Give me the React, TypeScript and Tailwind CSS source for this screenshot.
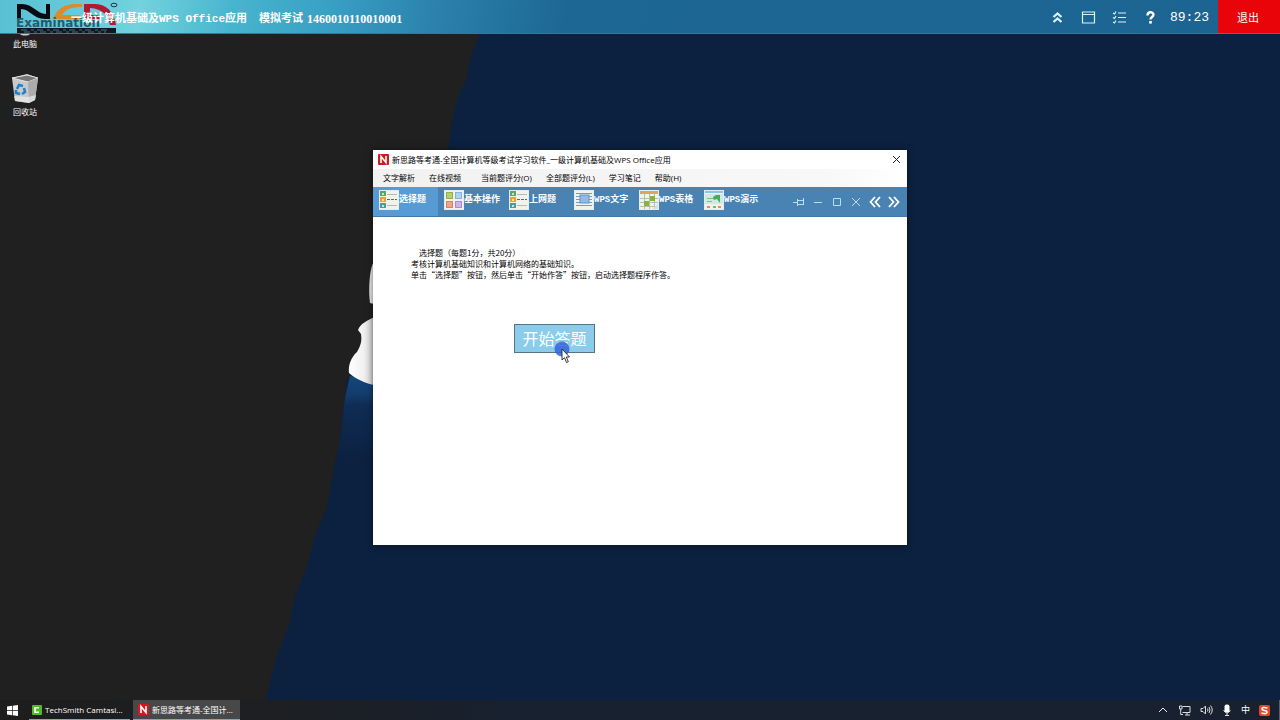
import type { ReactNode } from "react";

const cjk = "font-['Noto_Sans_CJK_SC',sans-serif]";
const ui = "font-['Open_Sans','Noto_Sans_CJK_SC',sans-serif]";
const mono = "font-['Liberation_Mono','Noto_Sans_CJK_SC',monospace]";

function Wallpaper() {
  return (
    <svg
      className="absolute inset-0 h-full w-full"
      viewBox="0 0 1280 720"
      preserveAspectRatio="xMidYMid slice"
      aria-hidden="true"
    >
      <defs>
        <linearGradient id="sea" x1="0" y1="0" x2="0" y2="1">
          <stop offset="0" stopColor="#15467a" />
          <stop offset="0.22" stopColor="#133c6c" />
          <stop offset="0.35" stopColor="#0f2c53" />
          <stop offset="1" stopColor="#0c2140" />
        </linearGradient>
        <linearGradient id="snow" x1="0" y1="0" x2="1" y2="0">
          <stop offset="0" stopColor="#ffffff" />
          <stop offset="0.6" stopColor="#f0f0f0" />
          <stop offset="1" stopColor="#c8c8c8" />
        </linearGradient>
      </defs>
      <rect width="1280" height="720" fill="#0c2140" />
      <path
        d="M0 0H490L480 34L471 56L466 80L458 96L452 120L448 150V250H373V385L347 378L344 402L339 444L335 462L326 510L315 535L306 570L295 595L289 625L277 655L266 698L260 720H0Z"
        fill="#202020"
      />
      <path d="M373 380L350 376L345 398L340 440L336 460H373Z" fill="url(#sea)" />
      <path d="M374 262C370 266 368 288 370 303L374 304Z" fill="#e4e4e4" />
      <path
        d="M374 317C367 321 361 323 358 330L361 334C362 341 361 345 357 352C351 357 348 366 349 373C356 379 365 383 374 385Z"
        fill="url(#snow)"
      />
    </svg>
  );
}

function Logo() {
  return (
    <div className="absolute left-4 top-0 h-[33px] w-[102px]" aria-hidden="true">
      <svg className="absolute inset-0" width="102" height="33" viewBox="0 0 102 33">
        <path d="M1 19V4H6C17 4 21 14 30 14V4H34V19H29C17 19 14 9 5 9V19Z" fill="#080b12" />
        <path d="M66 4H60C48 4 41 9 37 19H64V15H46C50 9 55 7 66 7Z" fill="#dd8a2b" />
        <path d="M68 4H78C90 4 98 11 100 25H94C92 15 87 9 74 8V15H84V19H68Z" fill="#b51632" />
        <ellipse cx="98" cy="5" rx="3" ry="1.8" fill="none" stroke="#1d3540" />
        <rect x="1" y="28" width="99" height="5" fill="#0d1820" />
        <path d="M5 30H94M8 32H90" stroke="#47727e" strokeDasharray="6 4 3 3" />
      </svg>
      <span className="absolute left-0 top-[18px] font-['DejaVu_Sans',sans-serif] text-xs leading-[11px] font-bold text-[#235b6c]">
        Examination
      </span>
    </div>
  );
}

function NIcon() {
  return (
    <svg width="11" height="11" viewBox="0 0 11 11" aria-hidden="true" className="shrink-0">
      <rect width="11" height="11" rx="1" fill="#d3191f" />
      <path d="M3 9V2.5L8 8.5V2" fill="none" stroke="#fff" strokeWidth="1.6" />
    </svg>
  );
}

function ListArt() {
  return (
    <>
      <rect x="1" y="1" width="6" height="5" fill="#5fa565" />
      <rect x="1" y="7" width="6" height="5" fill="#e0a63c" />
      <rect x="1" y="13" width="6" height="5" fill="#4f9b9c" />
      <rect x="3" y="3" width="2" height="2" fill="#d8e6a8" />
      <rect x="3" y="9" width="2" height="2" fill="#f6e3a8" />
      <rect x="3" y="15" width="2" height="2" fill="#c5e4df" />
      <path d="M8 4.500H18M8 15.500H18" stroke="#b9b9b9" />
      <path d="M8 9.500H18" stroke="#666" strokeDasharray="3 1" />
    </>
  );
}

function GridArt() {
  return (
    <>
      <rect x="2.500" y="2.500" width="6" height="6" fill="#b5cf6d" stroke="#94b24c" />
      <rect x="11.500" y="2.500" width="6" height="6" fill="#aed2ef" stroke="#83b3df" />
      <rect x="2.500" y="11.500" width="6" height="6" fill="#f0a38c" stroke="#dc8267" />
      <rect x="11.500" y="11.500" width="6" height="6" fill="#cbb5e8" stroke="#ab8cd0" />
    </>
  );
}

function DocArt() {
  return (
    <>
      <path d="M2 3.500H18M2 6.500H18M2 9.500H18M2 12.500H18M2 15.500H18" stroke="#7d9ab2" />
      <rect x="6" y="5" width="9" height="8" fill="#8fbbe4" stroke="#5e93c4" />
    </>
  );
}

function SheetArt() {
  return (
    <>
      <rect x="0" y="0" width="20" height="4" fill="#e7a05d" />
      <path d="M1 8.500H19M1 12.500H19M1 16.500H19M5.500 4V19M10.500 4V19M15.500 4V19" stroke="#b9bcae" />
      <rect x="11" y="6" width="5" height="5" fill="#84b63c" />
      <rect x="5" y="11" width="5" height="5" fill="#84b63c" />
      <path d="M13 20L20 12V20Z" fill="#d8e0e2" />
    </>
  );
}

function SlideArt() {
  return (
    <>
      <rect x="0" y="0" width="20" height="3" fill="#8cc5df" />
      <rect x="1" y="4" width="18" height="10" fill="#cfe9e3" />
      <path d="M3 8.500H11M3 11.500H8" stroke="#7cc09a" />
      <path d="M9 7L12 5H16V13L13 9L10 10Z" fill="#48a866" />
      <rect x="3" y="16" width="3" height="2" fill="#e28a69" />
      <rect x="9" y="16" width="3" height="2" fill="#7fb66b" />
      <rect x="14" y="16" width="3" height="2" fill="#e28a69" />
    </>
  );
}

const tabs: { label: string; art: ReactNode }[] = [
  { label: "选择题", art: <ListArt /> },
  { label: "基本操作", art: <GridArt /> },
  { label: "上网题", art: <ListArt /> },
  { label: "WPS文字", art: <DocArt /> },
  { label: "WPS表格", art: <SheetArt /> },
  { label: "WPS演示", art: <SlideArt /> },
];

const menus = [
  ["文字解析", "在线视频"],
  ["当前题评分(O)", "全部题评分(L)", "学习笔记", "帮助(H)"],
];

const tools = [
  { label: "固定", path: "M0 6.500H4M4.500 3V10M4.500 4.500H10M4.500 8.500H10M10.500 2V9" },
  { label: "最小化", path: "M2 6.500H10" },
  { label: "最大化", path: "M2.500 2.500H9.500V9.500H2.500Z" },
  { label: "关闭", path: "M2 2L10 10M10 2L2 10" },
];

function Header() {
  return (
    <header className="relative flex h-[34px] items-stretch justify-between border-b border-[#3d7690] bg-[linear-gradient(100deg,#58c0d4_0px,#72d2dd_140px,#48b5cf_230px,#389fc3_330px,#2b82ac_430px,#1d6794_560px,#1c6491_100%)] text-white">
      <Logo />
      <div className={`relative flex items-center gap-3 pl-[71px] pt-1 ${mono} font-bold`}>
        <h1 className="whitespace-nowrap text-[11px] leading-4">一级计算机基础及WPS Office应用</h1>
        <p className="flex items-center gap-1 whitespace-nowrap text-[11px] leading-4">
          <span>模拟考试</span>
          <span className="font-['Liberation_Serif',serif] text-xs leading-4">1460010110010001</span>
        </p>
      </div>
      <div className="relative flex items-stretch">
        <div className="flex items-center gap-3 pr-[9px] pt-0.5 text-[#d8f2ff]">
          <div className="flex items-center gap-4">
            <button aria-label="收起">
              <svg width="15" height="15" viewBox="0 0 15 15">
                <path d="M3.500 7L7.500 3.500L11.500 7M3.500 12L7.500 8.500L11.500 12" fill="none" stroke="currentColor" strokeWidth="2.300" />
              </svg>
            </button>
            <button aria-label="窗口">
              <svg width="15" height="15" viewBox="0 0 15 15">
                <path d="M1.500 2H13.500V13H1.500ZM1.500 4.500H13.500" fill="none" stroke="currentColor" strokeWidth="1.200" />
              </svg>
            </button>
            <button aria-label="题目列表">
              <svg width="15" height="15" viewBox="0 0 15 15">
                <path d="M6 3H14M6 7.500H14M6 12H14M1 3L2.500 4L4 1.500M1 7.500L2.500 8.500L4 6M1 12L2.500 13L4 10.500" fill="none" stroke="currentColor" strokeWidth="1.200" />
              </svg>
            </button>
            <button aria-label="帮助">
              <svg width="15" height="15" viewBox="0 0 15 15">
                <path d="M4.500 5.500C4.500 1.200 10.500 1.500 10.500 4.800C10.500 7 7.500 7 7.500 9.500" fill="none" stroke="#fff" strokeWidth="2.400" />
                <rect x="6.200" y="11" width="2.600" height="2.600" fill="#fff" />
              </svg>
            </button>
          </div>
          <time className={`${mono} text-[13px] leading-4 text-white`}>89:23</time>
        </div>
        <button className={`w-[62px] bg-[#e80409] pr-0.5 ${cjk} text-[11px] leading-4`}>退出</button>
      </div>
    </header>
  );
}

function Desktop() {
  return (
    <div className={`relative flex w-[50px] flex-col items-center ${cjk} text-[8px] leading-3 text-white`}>
      <div className="flex flex-col items-center">
        <svg width="26" height="4" viewBox="0 0 26 4" aria-hidden="true">
          <path d="M8 0H18C16 2 10 2 8 0Z" fill="#c9cdd0" />
        </svg>
        <span>此电脑</span>
      </div>
      <div className="mt-6 flex flex-col items-center gap-0.5">
        <svg width="28" height="30" viewBox="0 0 28 30" aria-hidden="true">
          <path d="M1 4L16 0L27 4L24 26L18 29L4 27Z" fill="#c9c9c9" />
          <path d="M1 4L16 1L27 4L17 8Z" fill="#777" stroke="#e6e6e6" />
          <path d="M17 8L27 4L24 26L18 29Z" fill="#acacac" />
          <path d="M3 22L17 23L25 21L24 26L18 29L4 27Z" fill="#ededed" opacity="0.700" />
          <path d="M6 15L8 11L12 12M13 14L14 18L11 20M9 20L5 19L5 16" fill="none" stroke="#1f82c9" strokeWidth="2.600" />
        </svg>
        <span>回收站</span>
      </div>
    </div>
  );
}

function ExamWindow() {
  return (
    <section className="absolute left-[373px] top-[150px] flex min-h-[395px] w-[534px] flex-col bg-white text-black shadow-[0_0_6px_rgba(0,0,0,0.5)]">
      <div className={`flex h-[19px] items-center gap-[3px] pl-[5px] pr-[5px] ${ui}`}>
        <NIcon />
        <h2 className="text-[8px] leading-3">新思路等考通-全国计算机等级考试学习软件_一级计算机基础及WPS Office应用</h2>
        <button aria-label="关闭窗口" className="ml-auto">
          <svg width="11" height="11" viewBox="0 0 11 11">
            <path d="M2 2L9 9M9 2L2 9" stroke="#222" fill="none" />
          </svg>
        </button>
      </div>
      <nav className={`flex h-[18px] items-center gap-5 bg-[linear-gradient(90deg,#f1f1f1_0%,#f8f8f8_85%,#ffffff_100%)] pl-2.5 ${ui} text-[8px] leading-3`}>
        {menus.map((group, i) => (
          <div key={i} className="flex gap-3.5">
            {group.map((item) => (
              <button key={item} className="whitespace-nowrap">{item}</button>
            ))}
          </div>
        ))}
      </nav>
      <div className="flex h-[30px] justify-between border-b border-[#4079a7] bg-[#4983b3] text-white">
        <div className="flex">
          {tabs.map((tab, i) => (
            <button
              key={tab.label}
              className={`flex w-[65px] items-start pl-1.5 pt-[3px] ${i === 0 ? "bg-[#569bd5]" : ""}`}
            >
              <svg width="20" height="20" viewBox="0 0 20 20" className="shrink-0" aria-hidden="true">
                <rect width="20" height="20" fill="#f1f3ea" />
                {tab.art}
                <rect x="0.500" y="0.500" width="19" height="19" fill="none" stroke="#e2edf3" />
              </svg>
              <span className={`whitespace-nowrap pt-0.5 ${mono} text-[9px] font-bold leading-4`}>
                {tab.label}
              </span>
            </button>
          ))}
        </div>
        <div className="flex items-center gap-[7px] pr-[7px] text-[#b9ddf6]">
          {tools.map((tool) => (
            <button key={tool.label} aria-label={tool.label}>
              <svg width="12" height="12" viewBox="0 0 12 12">
                <path d={tool.path} fill="none" stroke="currentColor" />
              </svg>
            </button>
          ))}
          <button aria-label="上一题">
            <svg width="12" height="12" viewBox="0 0 12 12">
              <path d="M6 1L1.500 6L6 11M11 1L6.500 6L11 11" fill="none" stroke="#fff" strokeWidth="1.800" />
            </svg>
          </button>
          <button aria-label="下一题">
            <svg width="12" height="12" viewBox="0 0 12 12">
              <path d="M1 1L5.500 6L1 11M6 1L10.500 6L6 11" fill="none" stroke="#fff" strokeWidth="1.800" />
            </svg>
          </button>
        </div>
      </div>
      <div className={`pl-[38px] pt-[30px] ${cjk}`}>
        <div className="text-[8px] leading-[11px]">
          <p className="pl-2">选择题（每题1分，共20分）</p>
          <p>考核计算机基础知识和计算机网络的基础知识。</p>
          <p>单击“选择题”按钮，然后单击“开始作答”按钮，启动选择题程序作答。</p>
        </div>
        <button className="ml-[103px] mt-11 flex h-[29px] w-[81px] items-start justify-center border border-[#557583] bg-[#8accea] text-base leading-[26px] text-white">
          开始答题
        </button>
      </div>
    </section>
  );
}

function Pointer() {
  return (
    <svg className="pointer-events-none absolute left-[554px] top-[341px]" width="18" height="24" viewBox="0 0 18 24" aria-hidden="true">
      <circle cx="8" cy="8" r="7.500" fill="#3363dc" opacity="0.850" />
      <path d="M8 8V19L10.500 16.700L12.500 21.500L14.300 20.700L12.300 16H15.500Z" fill="#fff" stroke="#222" strokeWidth="0.900" />
    </svg>
  );
}

function Taskbar() {
  return (
    <footer className={`relative mt-auto flex h-5 items-stretch justify-between bg-[linear-gradient(90deg,#1d1d1d_0%,#1d1f22_22%,#182130_40%,#182130_100%)] ${ui} text-white`}>
      <div className="flex items-stretch">
        <button aria-label="开始" className="flex w-[29px] items-center pl-[7px]">
          <svg width="11" height="11" viewBox="0 0 11 11">
            <path d="M0 1.500L5 0.800V5.200H0ZM5.700 0.700L11 0V5.200H5.700ZM0 5.900H5V10.300L0 9.600ZM5.700 5.900H11V11L5.700 10.300Z" fill="#fff" />
          </svg>
        </button>
        <button className="mr-[3px] flex w-[101px] items-center gap-[3px] border-b border-[#6cabde] pl-[3px] text-[8px] leading-3">
          <svg width="10" height="10" viewBox="0 0 10 10" aria-hidden="true" className="shrink-0">
            <rect width="10" height="10" rx="1" fill="#4fbd20" />
            <path d="M7 2.700H3V7.300H7" fill="none" stroke="#fff" strokeWidth="1.600" />
          </svg>
          <span className="whitespace-nowrap">TechSmith Camtasi...</span>
        </button>
        <button className="flex w-[107px] items-center gap-[3px] border-b border-[#6cabde] bg-[#484848] pl-[5px] text-[8px] leading-3">
          <NIcon />
          <span className="whitespace-nowrap">新思路等考通-全国计...</span>
        </button>
      </div>
      <div className="flex items-center gap-[9px]">
        <svg width="12" height="12" viewBox="0 0 12 12" aria-hidden="true">
          <path d="M2 8L6 4L10 8" fill="none" stroke="#eee" />
        </svg>
        <svg width="13" height="12" viewBox="0 0 13 12" aria-hidden="true">
          <path d="M4.500 2.500H12V8.500H4.500M7 11H12M9 8.500V11M1.500 2V5H4V2ZM2.700 5V10.500H5" fill="none" stroke="#ddd" />
        </svg>
        <svg width="13" height="12" viewBox="0 0 13 12" aria-hidden="true">
          <path d="M1 4.500H3L5.500 2V10L3 7.500H1ZM7.500 4.500Q8.500 6 7.500 7.500M9 3Q11 6 9 9M10.500 1.500Q14 6 10.500 10.500" fill="none" stroke="#ddd" />
        </svg>
        <svg width="10" height="12" viewBox="0 0 10 12" aria-hidden="true">
          <rect x="2.500" y="0.500" width="5" height="8" rx="2" fill="#fff" />
          <path d="M2 6V7Q5 11 8 7V6M5 9V11M3 11.500H7" fill="none" stroke="#ddd" />
        </svg>
        <span className="text-[9px] leading-3">中</span>
        <svg width="11" height="11" viewBox="0 0 11 11" aria-hidden="true">
          <rect width="11" height="11" rx="2" fill="#e2472a" />
          <path d="M8.500 3Q3 1.500 3 4Q3 5 5.500 5.500Q8.500 6 8 7.500Q7 9.500 2.500 8" fill="none" stroke="#fff" strokeWidth="1.600" />
        </svg>
        <span className="h-5 w-px border-l border-[#59606a]" />
      </div>
    </footer>
  );
}

export default function App() {
  return (
    <main className="relative flex min-h-screen flex-col overflow-hidden bg-[#0c2140]">
      <Wallpaper />
      <Header />
      <Desktop />
      <ExamWindow />
      <Pointer />
      <Taskbar />
    </main>
  );
}
